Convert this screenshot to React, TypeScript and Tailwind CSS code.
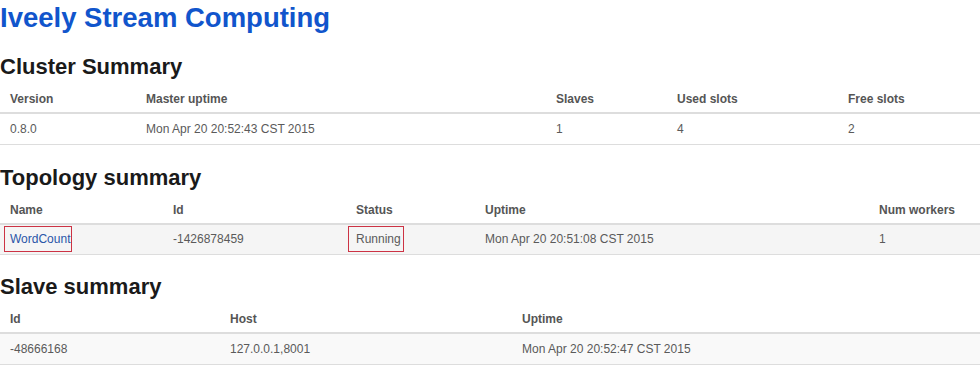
type Cell = { text: string; kind?: "link" | "boxed" };

interface TableProps {
  widths: number[];
  headers: string[];
  row: Cell[];
  rowBg: string;
}

function SummaryTable({ widths, headers, row, rowBg }: TableProps) {
  return (
    <table className="w-[980px] table-fixed border-collapse text-left text-[12px]">
      <colgroup>
        {widths.map((w, i) => (
          <col key={i} style={{ width: w }} />
        ))}
      </colgroup>
      <thead>
        <tr className="h-[28px] border-b-2 border-[#dddddd]">
          {headers.map((h) => (
            <th key={h} className="px-[10px] pt-[1px] font-bold text-[#555555]">
              {h}
            </th>
          ))}
        </tr>
      </thead>
      <tbody>
        <tr className={`h-[31px] border-b border-[#dddddd] ${rowBg}`}>
          {row.map((c, i) => (
            <td key={i} className="px-[10px] text-[#5a5a5a]">
              {c.kind === "link" ? (
                <span className="-ml-[6px] inline-block border border-[#cc3344] py-[4px] pl-[5px] pr-[1px] leading-[16px] text-[#2a55a8]">
                  {c.text}
                </span>
              ) : c.kind === "boxed" ? (
                <span className="-ml-[8px] inline-block border border-[#cc3344] py-[4px] pl-[7px] pr-[2px] leading-[16px]">
                  {c.text}
                </span>
              ) : (
                c.text
              )}
            </td>
          ))}
        </tr>
      </tbody>
    </table>
  );
}

export default function App() {
  return (
    <div className="w-[980px] bg-white font-['Liberation_Sans',Arial,sans-serif]">
      <h1 className="mt-[2px] text-[27.5px] font-bold leading-[32px] text-[#1155cc]">Iveely Stream Computing</h1>

      <h2 className="mt-[21px] text-[22px] font-bold leading-[24px] text-[#1a1a1a]">Cluster Summary</h2>
      <div className="mt-[6px]">
        <SummaryTable
          widths={[136, 410, 121, 171, 142]}
          headers={["Version", "Master uptime", "Slaves", "Used slots", "Free slots"]}
          row={[{ text: "0.8.0" }, { text: "Mon Apr 20 20:52:43 CST 2015" }, { text: "1" }, { text: "4" }, { text: "2" }]}
          rowBg="bg-white"
        />
      </div>

      <h2 className="mt-[21px] text-[22px] font-bold leading-[24px] text-[#1a1a1a]">Topology summary</h2>
      <div className="mt-[6px]">
        <SummaryTable
          widths={[163, 183, 129, 394, 111]}
          headers={["Name", "Id", "Status", "Uptime", "Num workers"]}
          row={[
            { text: "WordCount", kind: "link" },
            { text: "-1426878459" },
            { text: "Running", kind: "boxed" },
            { text: "Mon Apr 20 20:51:08 CST 2015" },
            { text: "1" },
          ]}
          rowBg="bg-[#f5f5f5]"
        />
      </div>

      <h2 className="mt-[20px] text-[22px] font-bold leading-[24px] text-[#1a1a1a]">Slave summary</h2>
      <div className="mt-[6px]">
        <SummaryTable
          widths={[220, 292, 468]}
          headers={["Id", "Host", "Uptime"]}
          row={[{ text: "-48666168" }, { text: "127.0.0.1,8001" }, { text: "Mon Apr 20 20:52:47 CST 2015" }]}
          rowBg="bg-[#f9f9f9]"
        />
      </div>
    </div>
  );
}
